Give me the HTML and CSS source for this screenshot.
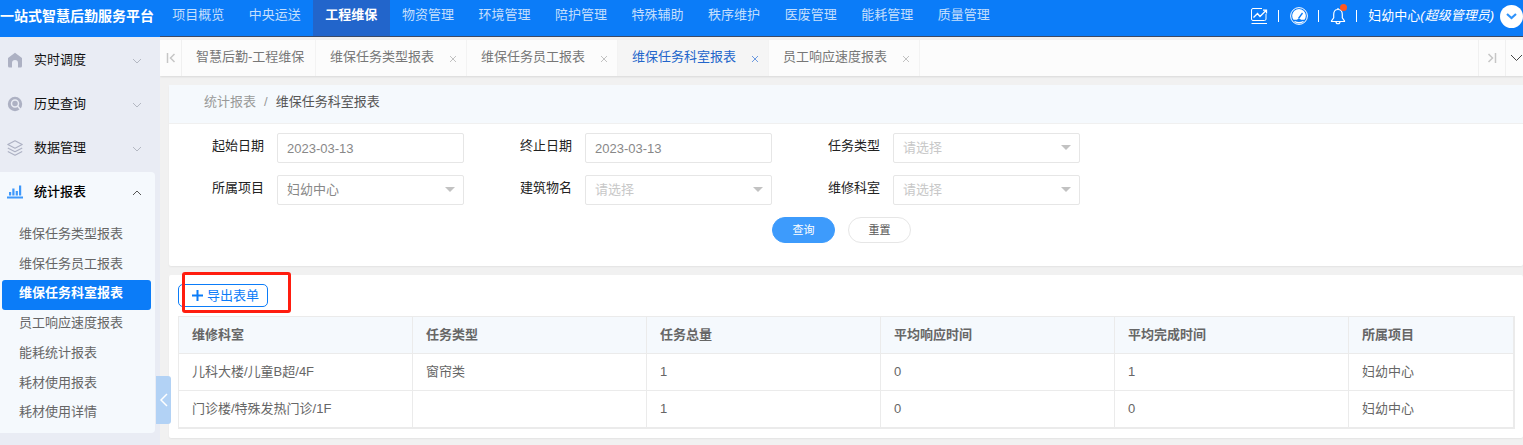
FILE: index.html
```html
<!DOCTYPE html>
<html lang="zh-CN">
  <head>
    <meta charset="UTF-8" />
    <meta name="viewport" content="width=device-width, initial-scale=1.0" />
    <title>维保任务科室报表</title>
    <link rel="stylesheet" href="styles.css">
  </head>
  <body>
    <aside class="side">
      <div class="logo">一站式智慧后勤服务平台</div>
      <nav class="side-nav">
        <a href="#" class="side-title">
          <svg class="side-icon" viewBox="0 0 16 16"><path fill="#adb1c3" d="M8 .8l7 5.200v8a1.500 1.500 0 0 1-1.500 1.500H11V11a3 3 0 0 0-6 0v4.500H2.500A1.500 1.500 0 0 1 1 14V6z"/></svg>
          <span>实时调度</span>
          <svg class="arrow" viewBox="0 0 10 6"><path d="M1 1l4 4 4-4"/></svg>
        </a>
        <a href="#" class="side-title">
          <svg class="side-icon" viewBox="0 0 16 16"><circle cx="8" cy="8" r="7.200" fill="#adb1c3"/><circle cx="8" cy="7.500" r="3.500" fill="none" stroke="#e9ecf4" stroke-width="1.500"/><path d="M10.500 10l3.500 4" stroke="#e9ecf4" stroke-width="1.500"/></svg>
          <span>历史查询</span>
          <svg class="arrow" viewBox="0 0 10 6"><path d="M1 1l4 4 4-4"/></svg>
        </a>
        <a href="#" class="side-title">
          <svg class="side-icon" viewBox="0 0 16 16" fill="none" stroke="#adb1c3" stroke-width="1.200" stroke-linejoin="round"><path d="M8 .8l7.200 3.700L8 8.200.8 4.500zM.8 8L8 11.700 15.200 8M.8 11.500L8 15.200l7.200-3.700"/></svg>
          <span>数据管理</span>
          <svg class="arrow" viewBox="0 0 10 6"><path d="M1 1l4 4 4-4"/></svg>
        </a>
        <div class="side-group">
          <a href="#" class="side-title side-title-open">
            <svg class="side-icon" viewBox="0 0 16 16"><path fill="#3d98fb" d="M0 12.500h16v2H0zM2 8h2.200v3.500H2zM5.300 4.500h2.200v7H5.300zM8.700 7h2.200v4.500H8.700zM12 1.500h2.200v10H12z"/></svg>
            <span>统计报表</span>
            <svg class="arrow" viewBox="0 0 10 6"><path d="M1 5l4-4 4 4"/></svg>
          </a>
          <div class="side-list">
            <a href="#">维保任务类型报表</a>
            <a href="#">维保任务员工报表</a>
            <a href="#" class="active">维保任务科室报表</a>
            <a href="#">员工响应速度报表</a>
            <a href="#">能耗统计报表</a>
            <a href="#">耗材使用报表</a>
            <a href="#">耗材使用详情</a>
          </div>
        </div>
      </nav>
      <button class="side-toggle" type="button" aria-label="收起菜单">
        <svg width="8" height="14" viewBox="0 0 8 14"><path d="M7 1L1 7l6 6" fill="none" stroke="#fff" stroke-width="1.500"/></svg>
      </button>
    </aside>

    <div class="main">
      <header class="header">
        <nav class="top-nav">
          <a href="#">项目概览</a>
          <a href="#">中央运送</a>
          <a href="#" class="active">工程维保</a>
          <a href="#">物资管理</a>
          <a href="#">环境管理</a>
          <a href="#">陪护管理</a>
          <a href="#">特殊辅助</a>
          <a href="#">秩序维护</a>
          <a href="#">医废管理</a>
          <a href="#">能耗管理</a>
          <a href="#">质量管理</a>
        </nav>
        <div class="user-bar">
          <a href="#" class="tool" aria-label="统计">
            <svg width="18" height="18" viewBox="0 0 18 18" fill="none" stroke="#fff"><path d="M12 1.500H3A1.500 1.500 0 0 0 1.500 3v9A1.500 1.500 0 0 0 3 13.500h11.500a1.500 1.500 0 0 0 1.500-1.500V7M1.500 16.500H17"/><path d="M3.500 10.500l4-4 2.500 3 6-6M13 3.200h3.500v3.300" stroke-width="1.300"/></svg>
          </a>
          <i class="split"></i>
          <a href="#" class="tool" aria-label="仪表盘">
            <svg width="18" height="18" viewBox="0 0 18 18"><circle cx="9" cy="9" r="8.400" fill="none" stroke="#fff"/><path fill="#fff" d="M3.500 12.800A6.800 6.800 0 1 1 14.500 12.800H11a2.300 2.300 0 0 0-4 0z"/><path d="M8.500 11.500L12.500 6" stroke="#0b7cf8" stroke-width="1.300"/><path d="M4.500 14.500q4.500 2.500 9 0" fill="none" stroke="#fff" stroke-width="1.300"/></svg>
          </a>
          <i class="split"></i>
          <a href="#" class="tool" aria-label="消息">
            <svg width="16" height="18" viewBox="0 0 16 18" fill="none" stroke="#fff" stroke-width="1.200"><path d="M8 2.500c-3 0-4.300 2.200-4.300 5v3.300L1.500 14v.5h13V14l-2.200-3.200V7.500c0-2.800-1.300-5-4.300-5zM8 2.500V1M6 14.500c0 3 4 3 4 0"/></svg>
            <span class="dot"></span>
          </a>
          <i class="split"></i>
          <a href="#" class="user">妇幼中心<em>(超级管理员)</em></a>
          <button class="user-more" type="button" aria-label="更多">
            <svg width="11" height="7" viewBox="0 0 11 7"><path d="M1 1l4.500 4L10 1" fill="none" stroke="#2f93fb" stroke-width="2.200"/></svg>
          </button>
        </div>
      </header>

      <div class="tabs">
        <button class="tab-btn" type="button" aria-label="向左"><svg width="10" height="10" viewBox="0 0 10 10"><path d="M1.500 0v10M8.500 1l-4 4 4 4"/></svg></button>
        <a href="#" class="tab tab-home">智慧后勤-工程维保</a>
        <a href="#" class="tab">维保任务类型报表<svg class="close" viewBox="0 0 8 8"><path d="M1 1l6 6M7 1L1 7"/></svg></a>
        <a href="#" class="tab">维保任务员工报表<svg class="close" viewBox="0 0 8 8"><path d="M1 1l6 6M7 1L1 7"/></svg></a>
        <a href="#" class="tab active">维保任务科室报表<svg class="close" viewBox="0 0 8 8"><path d="M1 1l6 6M7 1L1 7"/></svg></a>
        <a href="#" class="tab">员工响应速度报表<svg class="close" viewBox="0 0 8 8"><path d="M1 1l6 6M7 1L1 7"/></svg></a>
        <button class="tab-btn tab-next" type="button" aria-label="向右"><svg width="10" height="10" viewBox="0 0 10 10"><path d="M8.500 0v10M1.500 1l4 4-4 4"/></svg></button>
        <button class="tab-btn tab-more" type="button" aria-label="更多标签"><svg width="13" height="8" viewBox="0 0 13 8"><path d="M1 1l5.500 5.500L12 1"/></svg></button>
      </div>

      <main class="content">
        <section class="card">
          <div class="crumb"><a href="#">统计报表</a><span>/</span><b>维保任务科室报表</b></div>
          <form class="search">
            <div class="fields">
              <div class="field">
                <label for="start">起始日期</label>
                <div class="control"><input id="start" type="text" value="2023-03-13"></div>
              </div>
              <div class="field">
                <label for="end">终止日期</label>
                <div class="control"><input id="end" type="text" value="2023-03-13"></div>
              </div>
              <div class="field">
                <label for="type">任务类型</label>
                <div class="control select"><select id="type" class="empty"><option>请选择</option></select></div>
              </div>
              <div class="field">
                <label for="project">所属项目</label>
                <div class="control select"><select id="project"><option>妇幼中心</option></select></div>
              </div>
              <div class="field">
                <label for="building">建筑物名</label>
                <div class="control select"><select id="building" class="empty"><option>请选择</option></select></div>
              </div>
              <div class="field">
                <label for="dept">维修科室</label>
                <div class="control select"><select id="dept" class="empty"><option>请选择</option></select></div>
              </div>
            </div>
            <div class="btns">
              <button class="btn btn-primary" type="button">查询</button>
              <button class="btn" type="reset">重置</button>
            </div>
          </form>
        </section>

        <section class="card result">
          <button class="export" type="button">
            <svg width="11" height="11" viewBox="0 0 11 11"><path d="M5.500 0v11M0 5.500h11" stroke="#0b7cf8" stroke-width="2"/></svg>
            导出表单
          </button>
          <div class="mark"></div>
          <table>
            <thead>
              <tr><th>维修科室</th><th>任务类型</th><th>任务总量</th><th>平均响应时间</th><th>平均完成时间</th><th>所属项目</th></tr>
            </thead>
            <tbody>
              <tr><td>儿科大楼/儿童B超/4F</td><td>窗帘类</td><td>1</td><td>0</td><td>1</td><td>妇幼中心</td></tr>
              <tr><td>门诊楼/特殊发热门诊/1F</td><td></td><td>1</td><td>0</td><td>0</td><td>妇幼中心</td></tr>
            </tbody>
          </table>
        </section>
      </main>
    </div>
  </body>
</html>
```
FILE: styles.css
```css
* {
  box-sizing: border-box;
}

body {
  margin: 0;
  display: flex;
  min-height: 100vh;
  background: #f1f1f1;
  color: #666;
  font: 13px/20px "Liberation Sans", "Noto Sans CJK SC", sans-serif;
}

a {
  color: inherit;
  text-decoration: none;
}

button,
input,
select {
  margin: 0;
  padding: 0;
  border: 0;
  background: none;
  font: inherit;
  color: inherit;
}

svg {
  display: block;
  flex: none;
}

/* sidebar */
.side {
  position: relative;
  flex: none;
  width: 160px;
  background: #e9ecf4;
}

.logo {
  display: flex;
  justify-content: flex-end;
  height: 37px;
  padding-right: 6px;
  overflow: hidden;
  background: #0b7cf8;
  color: #fff;
  font-size: 14px;
  font-weight: bold;
  line-height: 32px;
  white-space: nowrap;
}

.side-nav {
  padding-top: 1px;
}

.side-title {
  display: flex;
  align-items: center;
  height: 44px;
  padding: 0 18px 0 7px;
  color: #111;
}

.side-icon {
  width: 16px;
  height: 16px;
  margin-right: 11px;
}

.arrow {
  width: 10px;
  height: 6px;
  margin: 2px 0 0 auto;
  fill: none;
  stroke: #b4b8c2;
}

.side-group {
  width: 155px;
  margin-top: 2px;
  padding-bottom: 4px;
  border-radius: 0 4px 4px 0;
  background: #f5f9fd;
}

.side-title-open {
  height: 40px;
  padding-right: 13px;
  color: #000;
  font-weight: 500;
}

.side-title-open .arrow {
  stroke: #555;
}

.side-list {
  display: grid;
  grid-auto-rows: 1fr;
  height: 217px;
  padding: 9px 4px 0 2px;
}

.side-list a {
  padding-left: 17px;
  line-height: 26px;
}

.side-list .active {
  border-radius: 3px;
  background: #0b7cf8;
  color: #fff;
  font-weight: bold;
}

.side-toggle {
  position: absolute;
  top: 376px;
  left: 156px;
  z-index: 1;
  display: flex;
  align-items: center;
  width: 15px;
  height: 48px;
  padding-left: 4px;
  border-radius: 0 3px 3px 0;
  background: #b2d2f5;
}

/* header */
.main {
  flex: 1;
  min-width: 0;
}

.header {
  display: flex;
  justify-content: space-between;
  height: 37px;
  border-bottom: 1px solid #3b4a66;
  background: #0b7cf8;
  color: #fff;
}

.top-nav {
  display: grid;
  grid-template-columns: repeat(11, 1fr);
  width: 842px;
}

.top-nav a {
  color: #c4dffd;
  line-height: 29px;
  text-align: center;
}

.top-nav .active {
  background: #2265cb;
  color: #fff;
  font-weight: bold;
}

.user-bar {
  display: flex;
  align-items: center;
  height: 32px;
}

.tool {
  position: relative;
}

.dot {
  position: absolute;
  top: -3px;
  right: -1px;
  width: 7px;
  height: 7px;
  border-radius: 50%;
  background: #ff5722;
}

.split {
  width: 1px;
  height: 12px;
  margin: 0 11px 0 10px;
  background: #fff;
}

.user {
  white-space: nowrap;
}

.user-more {
  display: flex;
  align-items: center;
  justify-content: center;
  width: 23px;
  height: 23px;
  margin-left: 6px;
  border-radius: 50%;
  background: #fff;
}

/* tabs */
.tabs {
  display: flex;
  height: 36px;
  margin-top: 3px;
  background: #fcfcfc;
  box-shadow: 0 1px 2px rgba(0, 0, 0, .1);
  color: #777;
}

.tab {
  display: flex;
  align-items: center;
  width: 151px;
  padding: 0 9px 2px 14px;
  border-right: 1px solid #f3f3f3;
  white-space: nowrap;
}

.tab-home {
  width: 134px;
}

.tab.active {
  background: #f5f5f5;
  color: #2265cb;
}

.close {
  width: 8px;
  height: 8px;
  margin: 4px 0 0 auto;
  fill: none;
  stroke: #c2c2c2;
}

.tab.active .close {
  stroke: #6d9ae0;
}

.tab-btn {
  display: flex;
  align-items: center;
  justify-content: center;
  width: 22px;
  border-right: 1px solid #f0f0f0;
}

.tab-btn path {
  fill: none;
  stroke: #c6c6c6;
  stroke-width: 1.5;
}

.tab-next {
  width: 28px;
  margin-left: auto;
  border-left: 1px solid #f0f0f0;
}

.tab-more {
  justify-content: flex-end;
  width: 17px;
  border: 0;
}

.tab-more path {
  stroke: #444;
  stroke-width: 1;
}

/* content */
.content {
  padding: 9px 0 7px 9px;
}

.card {
  border-radius: 2px;
  background: #fff;
  box-shadow: 0 1px 2px rgba(0, 0, 0, .06);
}

.crumb {
  display: flex;
  height: 39px;
  padding-left: 35px;
  border-bottom: 1px solid #f0f0f0;
  background: #f5f9fd;
  line-height: 34px;
}

.crumb a,
.crumb span {
  color: #999;
}

.crumb span {
  margin: 0 8px;
}

.crumb b {
  color: #555;
  font-weight: normal;
}

.search {
  padding: 9px 0 23px;
}

.fields {
  display: grid;
  grid-template-columns: repeat(3, minmax(0, 308px));
  gap: 12px 0;
}

.field {
  display: flex;
  gap: 13px;
  padding-right: 13px;
}

.field label {
  flex: none;
  width: 95px;
  color: #222;
  line-height: 26px;
  text-align: right;
}

.control {
  position: relative;
  flex: 1;
}

.control input,
.control select {
  width: 100%;
  height: 30px;
  padding: 0 9px;
  border: 1px solid #e6e6e6;
  border-radius: 2px;
  appearance: none;
  color: #888;
}

.control .empty {
  color: #c8c8c8;
}

.select::after {
  content: "";
  position: absolute;
  top: 12px;
  right: 9px;
  border: 5px solid transparent;
  border-top-color: #c2c2c2;
  border-bottom: 0;
  pointer-events: none;
}

.btns {
  display: flex;
  justify-content: center;
  gap: 13px;
  margin-top: 12px;
  padding-right: 9px;
}

.btn {
  width: 63px;
  height: 26px;
  border: 1px solid #e6e6e6;
  border-radius: 13px;
  color: #555;
  font-size: 11px;
}

.btn-primary {
  border-color: #3d9bfc;
  background: #3d9bfc;
  color: #fff;
}

.result {
  position: relative;
  margin-top: 9px;
  padding: 9px 8px 9px 9px;
}

.export {
  display: flex;
  align-items: center;
  gap: 4px;
  height: 23px;
  padding: 0 8px 0 13px;
  border: 1px solid #0b7cf8;
  border-radius: 5px;
  color: #0b7cf8;
  line-height: 20px;
}

.mark {
  position: absolute;
  top: -3px;
  left: 13px;
  width: 109px;
  height: 41px;
  border: 3px solid #ff1d0f;
  border-radius: 3px;
  pointer-events: none;
}

table {
  width: 100%;
  margin-top: 9px;
  border: 1px solid #ebebeb;
  border-width: 1px 2px 2px 1px;
  border-spacing: 0;
  table-layout: fixed;
}

th,
td {
  width: 234px;
  height: 37px;
  padding: 0 13px;
  border-right: 1px solid #ebebeb;
  border-bottom: 1px solid #ebebeb;
  text-align: left;
}

th {
  background: #f5f9fd;
}

th:last-child,
td:last-child {
  width: auto;
  border-right: 0;
}

tbody tr:last-child td {
  height: 36px;
  border-bottom: 0;
}
```
